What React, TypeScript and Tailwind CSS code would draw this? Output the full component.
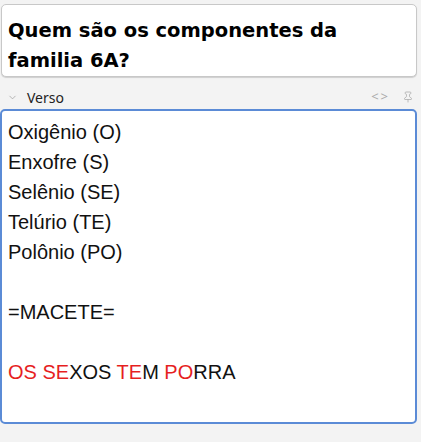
import { ChevronDown, Pin } from 'lucide-react'

const Red = ({ children }: { children: React.ReactNode }) => (
    <span className="text-[#e61f1f]">{children}</span>
)

const App = () => {
    return (
        <div className="w-[421px] h-[442px] bg-[#f3f3f3] pt-[4px] pl-[1px] pr-[4px] font-['Liberation_Sans',Arial,sans-serif]">
            <div className="rounded-[5px] border border-[#c8c8c8] bg-white shadow-[0_1px_1px_rgba(0,0,0,0.15)] h-[73px] px-[6px] pt-[11px]">
                <p className="text-[19.5px] leading-[30px] font-bold text-black font-['DejaVu_Sans',sans-serif]">
                    Quem são os componentes da familia 6A?
                </p>
            </div>

            <div className="flex items-center h-[32px] pt-[8px] pl-[6px] pr-[3px] text-[#333] font-['Noto_Sans',sans-serif]">
                <ChevronDown className="w-[11px] h-[11px] text-[#999]" strokeWidth={1.5} />
                <span className="ml-[9px] text-[14px] text-[#222]">Verso</span>
                <div className="ml-auto flex items-center gap-[12px] text-[#aaa]">
                    <span className="text-[13px] tracking-[2px]">&lt;&gt;</span>
                    <Pin className="w-[12px] h-[12px]" strokeWidth={1.5} />
                </div>
            </div>

            <div className="rounded-[5px] border-2 border-[#5b8bd6] bg-white h-[315px] -ml-[1px] px-[6px] pt-[6px]">
                <div className="text-[20px] leading-[30px] text-[#111]">
                    <div>Oxigênio (O)</div>
                    <div>Enxofre (S)</div>
                    <div>Selênio (SE)</div>
                    <div>Telúrio (TE)</div>
                    <div>Polônio (PO)</div>
                    <div>&nbsp;</div>
                    <div>=MACETE=</div>
                    <div>&nbsp;</div>
                    <div>
                        <Red>OS SE</Red>XOS <Red>TE</Red>M <Red>PO</Red>RRA
                    </div>
                </div>
            </div>
        </div>
    )
}

export default App
